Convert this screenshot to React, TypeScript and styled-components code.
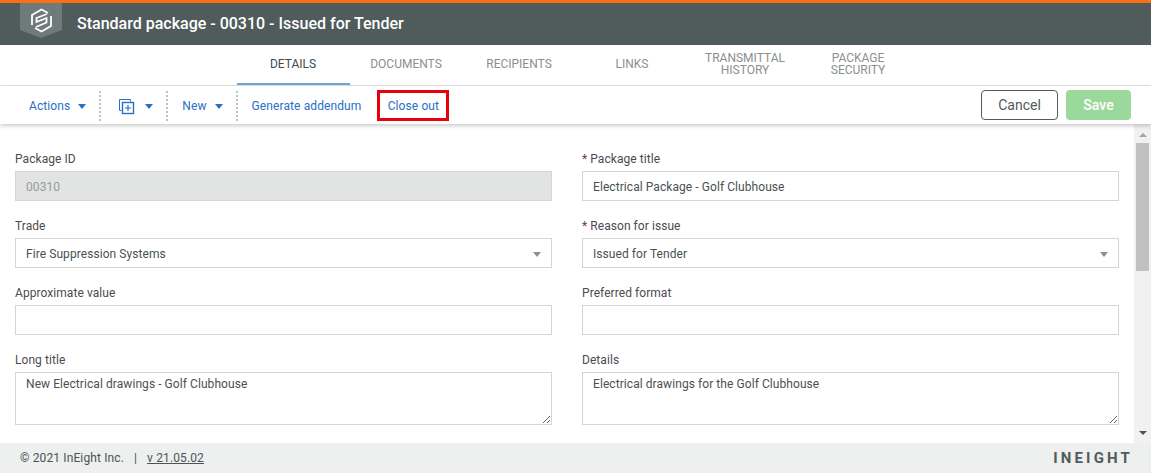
import React from "react";
import styled, { createGlobalStyle } from "styled-components";

const GlobalStyle = createGlobalStyle`
    html, body {
        margin: 0;
        padding: 0;
        background: #fff;
        font-family: Roboto, "Liberation Sans", sans-serif;
    }
`;

const Page = styled.div`
    width: 1151px;
    height: 473px;
    display: flex;
    flex-direction: column;
    overflow: hidden;
`;

const Header = styled.header`
    height: 42px;
    flex: none;
    border-top: 3px solid #fa6e14;
    background: #505b5c;
    display: flex;
    align-items: flex-start;
    padding-left: 20px;
    color: #fff;
`;

const LogoWrap = styled.svg`
    width: 42px;
    height: 35px;
    flex: none;
`;

const PageTitle = styled.h1`
    margin: 0 0 0 15px;
    font-size: 16px;
    font-weight: 500;
    line-height: 41px;
`;

const TabBar = styled.nav`
    height: 40px;
    flex: none;
    display: flex;
    padding-left: 237px;
    border-bottom: 1px solid #e0e2e2;
`;

const Tab = styled.div<{ $active?: boolean }>`
    width: 113px;
    height: 40px;
    display: flex;
    align-items: center;
    justify-content: center;
    text-align: center;
    box-sizing: border-box;
    font-size: 12px;
    line-height: 12px;
    padding: 0 1px ${(p) => (p.$active ? "1px" : "3px")} 0;
    color: ${(p) => (p.$active ? "#3f4a4b" : "#8a8f90")};
    border-bottom: ${(p) => (p.$active ? "2px solid #6ea6d8" : "none")};
`;

const Toolbar = styled.div`
    height: 38px;
    flex: none;
    display: flex;
    align-items: center;
    padding: 0 20px 0 15px;
    box-shadow: 0 2px 4px rgba(0, 0, 0, 0.2);
    position: relative;
    z-index: 1;
    background: #fff;
`;

const ToolGroup = styled.div<{ $dashed?: boolean }>`
    height: 30px;
    margin-top: 2px;
    display: flex;
    align-items: center;
    padding: 0 13px 0 14px;
    border-right: ${(p) => (p.$dashed ? "2px dotted #bfc2c2" : "none")};
    color: #2a6ec6;
    font-size: 12px;
    letter-spacing: 0.1px;
`;

const Caret = styled.span<{ $color?: string; $gap?: number }>`
    width: 0;
    height: 0;
    margin-left: ${(p) => p.$gap ?? 8}px;
    border-left: 4.5px solid transparent;
    border-right: 4.5px solid transparent;
    border-top: 5px solid ${(p) => p.$color ?? "#2a6ec6"};
`;

const IconSlot = styled.span`
    display: flex;
    margin-left: 3px;
`;

const CloseOut = styled.div`
    width: 72px;
    height: 31px;
    margin: 1px 0 0 3px;
    box-sizing: border-box;
    display: flex;
    align-items: center;
    justify-content: center;
    border: 3px solid #e8000d;
    color: #2a6ec6;
    font-size: 12px;
    letter-spacing: 0.1px;
`;

const Spacer = styled.div`
    flex: 1;
`;

const Cancel = styled.button`
    width: 77px;
    height: 30px;
    border: 1px solid #505b5c;
    border-radius: 4px;
    background: #fff;
    color: #505b5c;
    font: 400 14px Roboto, sans-serif;
`;

const Save = styled.button`
    width: 65px;
    height: 30px;
    margin-left: 8px;
    border: none;
    border-radius: 4px;
    background: #9bd89b;
    color: #fff;
    font: 500 14px Roboto, sans-serif;
`;

const Body = styled.main`
    flex: 1;
    min-height: 0;
    display: flex;
`;

const Form = styled.div`
    flex: 1;
    padding: 25px 15px 0;
    display: grid;
    grid-template-columns: 537px 537px;
    column-gap: 30px;
    grid-auto-rows: 67px;
    align-content: start;
`;

const Field = styled.div`
    display: flex;
    flex-direction: column;
    min-width: 0;
`;

const Label = styled.label`
    height: 22px;
    flex: none;
    font-size: 12px;
    line-height: 20px;
    letter-spacing: 0.06px;
    color: #4d4a50;
`;

const Input = styled.input`
    height: 30px;
    flex: none;
    box-sizing: border-box;
    padding: 2px 10px 0;
    border: 1px solid #d4d5d5;
    background: ${(p) => (p.disabled ? "#e2e3e3" : "#fff")};
    color: ${(p) => (p.disabled ? "#9a9c9c" : "#4a5152")};
    font: 400 12px Roboto, sans-serif;
    letter-spacing: 0.07px;
    outline: none;
`;

const SelectBox = styled.div`
    height: 30px;
    flex: none;
    box-sizing: border-box;
    padding: 2px 10px 0;
    border: 1px solid #d4d5d5;
    display: flex;
    align-items: center;
    justify-content: space-between;
    color: #4a5152;
    font-size: 12px;
    letter-spacing: 0.07px;
`;

const Area = styled.textarea`
    height: 53px;
    flex: none;
    box-sizing: border-box;
    padding: 4px 10px;
    border: 1px solid #d4d5d5;
    color: #4a5152;
    font: 400 12px Roboto, sans-serif;
    letter-spacing: 0.07px;
    outline: none;
`;

const Scrollbar = styled.div`
    width: 17px;
    flex: none;
    background: #f1f1f1;
    display: flex;
    flex-direction: column;
    align-items: center;
`;

const ScrollUp = styled.span`
    margin-top: 9px;
    border-left: 4px solid transparent;
    border-right: 4px solid transparent;
    border-bottom: 4px solid #a3a3a3;
`;

const ScrollDown = styled.span`
    margin-top: 160px;
    border-left: 4px solid transparent;
    border-right: 4px solid transparent;
    border-top: 4px solid #505050;
`;

const Thumb = styled.div`
    width: 13px;
    height: 128px;
    margin-top: 6px;
    background: #c1c1c1;
`;

const Footer = styled.footer`
    height: 30px;
    flex: none;
    background: #eeefef;
    display: flex;
    align-items: center;
    padding: 0 16px 0 20px;
    font-size: 12px;
    letter-spacing: 0.13px;
    color: #4d5354;
`;

const Divider = styled.span`
    margin: 0 10px;
`;

const Version = styled.span`
    text-decoration: underline;
`;

const Brand = styled.span`
    margin-left: auto;
    margin-right: 2px;
    font-size: 15px;
    font-weight: 700;
    letter-spacing: 3.15px;
    color: #505b5c;
`;

const Logo = () => (
    <LogoWrap viewBox="0 0 42 35">
        <path d="M0 0H42V27L21 35L0 27Z" fill="#6f7a7b" />
        <path
            d="M28 10L21.5 6.5L12 12V22M15 25L21.5 28.5L31 23V13"
            fill="none"
            stroke="#fff"
            strokeWidth="1.8"
        />
        <path
            d="M27 11L16.5 15V19L26.5 15V19.5L16 24"
            fill="none"
            stroke="#fff"
            strokeWidth="1.8"
        />
    </LogoWrap>
);

const CopyPlus = () => (
    <svg width="17" height="17" viewBox="0 0 17 17" fill="none" stroke="#2a6ec6" strokeWidth="1">
        <path d="M3.5 12.5H1.5V1.5H12.5V3.5" />
        <rect x="4.5" y="4.5" width="11" height="11" strokeWidth="1.4" />
        <path d="M10 7V13M7 10H13" strokeWidth="1.2" />
    </svg>
);

const App: React.FC = () => {
    return (
        <Page>
            <GlobalStyle />
            <Header>
                <Logo />
                <PageTitle>Standard package - 00310 - Issued for Tender</PageTitle>
            </Header>
            <TabBar>
                <Tab $active>DETAILS</Tab>
                <Tab>DOCUMENTS</Tab>
                <Tab>RECIPIENTS</Tab>
                <Tab>LINKS</Tab>
                <Tab>TRANSMITTAL<br />HISTORY</Tab>
                <Tab>PACKAGE<br />SECURITY</Tab>
            </TabBar>
            <Toolbar>
                <ToolGroup $dashed>Actions<Caret /></ToolGroup>
                <ToolGroup $dashed><IconSlot><CopyPlus /></IconSlot><Caret $gap={10} /></ToolGroup>
                <ToolGroup $dashed>New<Caret /></ToolGroup>
                <ToolGroup>Generate addendum</ToolGroup>
                <CloseOut>Close out</CloseOut>
                <Spacer />
                <Cancel>Cancel</Cancel>
                <Save>Save</Save>
            </Toolbar>
            <Body>
                <Form>
                    <Field>
                        <Label>Package ID</Label>
                        <Input disabled defaultValue="00310" />
                    </Field>
                    <Field>
                        <Label>* Package title</Label>
                        <Input defaultValue="Electrical Package - Golf Clubhouse" />
                    </Field>
                    <Field>
                        <Label>Trade</Label>
                        <SelectBox>Fire Suppression Systems<Caret $color="#8f8f8f" /></SelectBox>
                    </Field>
                    <Field>
                        <Label>* Reason for issue</Label>
                        <SelectBox>Issued for Tender<Caret $color="#8f8f8f" /></SelectBox>
                    </Field>
                    <Field>
                        <Label>Approximate value</Label>
                        <Input />
                    </Field>
                    <Field>
                        <Label>Preferred format</Label>
                        <Input />
                    </Field>
                    <Field>
                        <Label>Long title</Label>
                        <Area defaultValue="New Electrical drawings - Golf Clubhouse" />
                    </Field>
                    <Field>
                        <Label>Details</Label>
                        <Area defaultValue="Electrical drawings for the Golf Clubhouse" />
                    </Field>
                </Form>
                <Scrollbar>
                    <ScrollUp />
                    <Thumb />
                    <ScrollDown />
                </Scrollbar>
            </Body>
            <Footer>
                © 2021 InEight Inc.<Divider>|</Divider><Version>v 21.05.02</Version>
                <Brand>INEIGHT</Brand>
            </Footer>
        </Page>
    );
};

export default App;
